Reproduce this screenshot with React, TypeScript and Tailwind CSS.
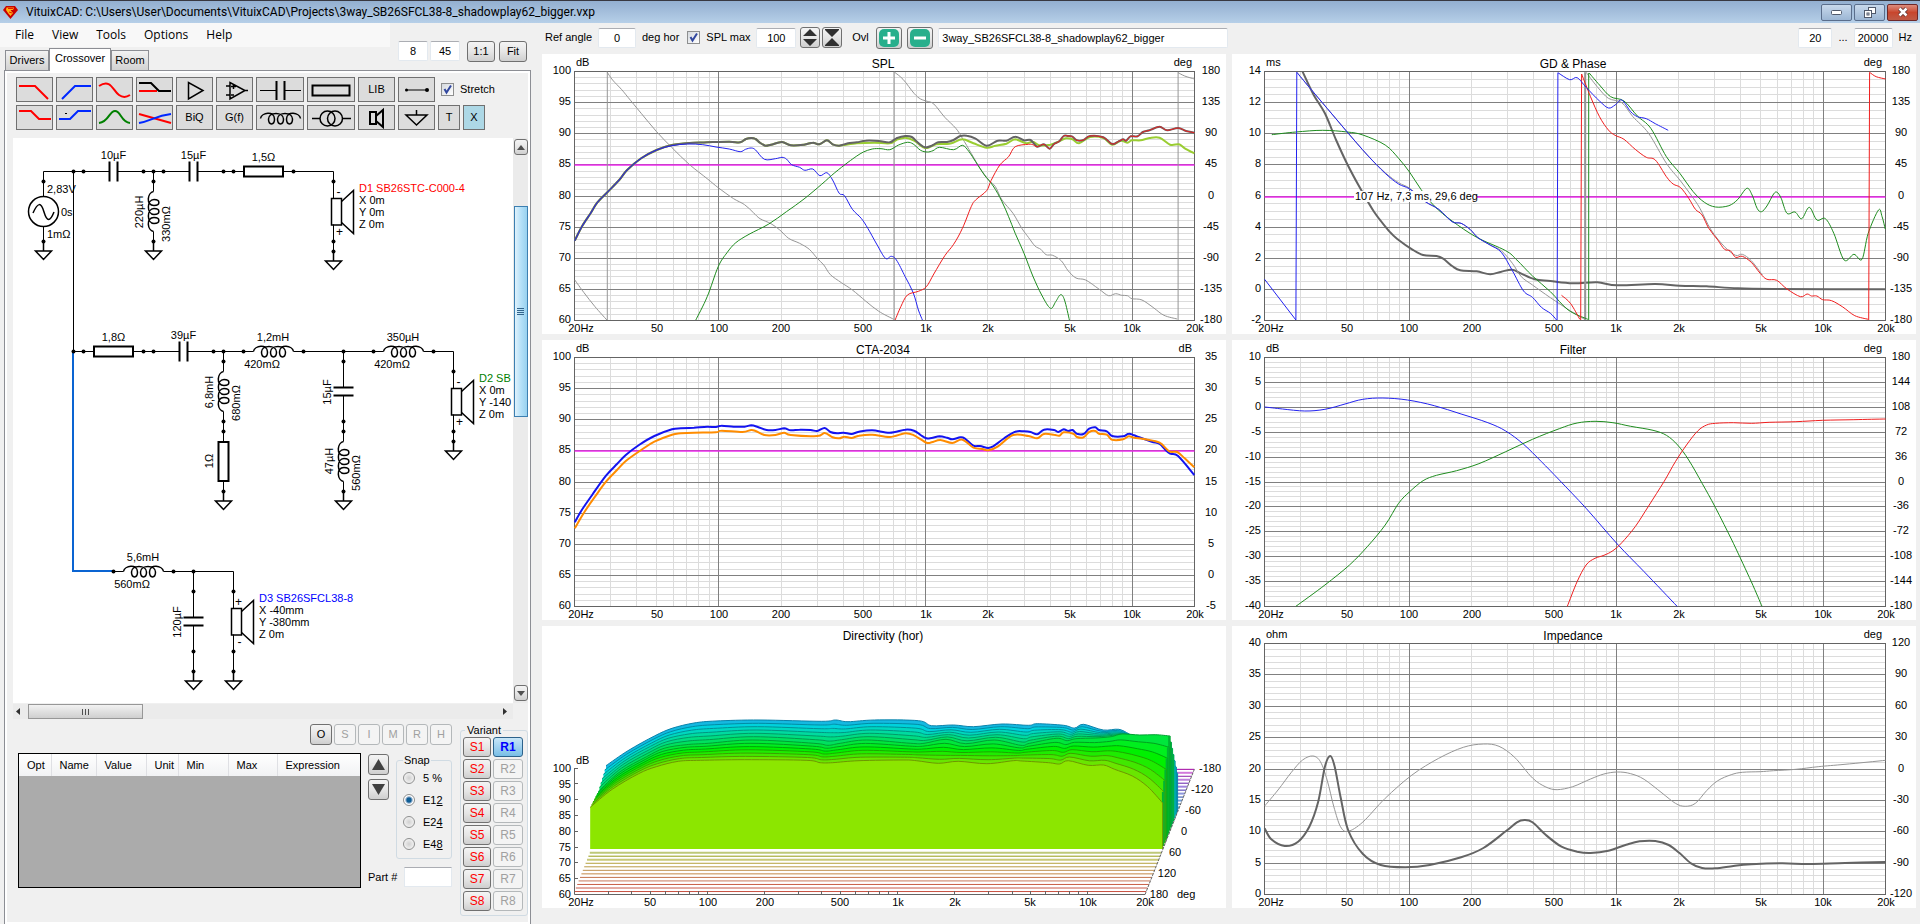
import type { ReactNode } from "react";
import clsx from "clsx";

type Curve = { pts: string; color: string; width?: number; straight?: boolean };
type Scale = { ox: number; oy: number; kx: number; ky: number };

const samples = (pts: string, s: Scale): [number, number][] =>
  pts.split(" ").map((p) => {
    const [x, y] = p.split(",").map(Number);
    return [x / s.kx + s.ox, y / s.ky + s.oy];
  });

const smoothPath = (p: [number, number][]) => {
  let d = `M${p[0][0].toFixed(1)},${p[0][1].toFixed(1)}`;
  for (let i = 0; i < p.length - 1; i++) {
    const a = p[Math.max(i - 1, 0)];
    const b = p[i];
    const c = p[i + 1];
    const e = p[Math.min(i + 2, p.length - 1)];
    const nums = [
      b[0] + (c[0] - a[0]) / 6, b[1] + (c[1] - a[1]) / 6,
      c[0] - (e[0] - b[0]) / 6, c[1] - (e[1] - b[1]) / 6,
      c[0], c[1],
    ];
    d += "C" + nums.map((n) => n.toFixed(1)).join(" ");
  }
  return d;
};

const linePath = (p: [number, number][]) => "M" + p.map((q) => `${q[0].toFixed(1)},${q[1].toFixed(1)}`).join("L");

const snap = (n: number) => Math.floor(n) + 0.5;

const minorFreqs = [30, 40, 50, 60, 70, 80, 90, 200, 300, 400, 500, 600, 700, 800, 900, 2000, 3000, 4000, 5000, 6000, 7000, 8000, 9000];
const majorFreqs = [100, 1000, 10000];
const freqLabels: [number, string][] = [
  [50, "50"], [100, "100"], [200, "200"], [500, "500"], [1000, "1k"],
  [2000, "2k"], [5000, "5k"], [10000, "10k"], [20000, "20k"],
];

const leftScale = (oy: number): Scale => ({ ox: -2, oy, kx: 2.2725, ky: 3 });
const rightScale = (oy: number): Scale => ({ ox: -12, oy, kx: 2.24, ky: 3 });

const GREY = "#969696";
const DARK = "#646464";
const BLUE = "#2222f0";
const GREEN = "#1e8c1e";
const RED = "#f01e1e";

const overallLow =
  "79,722 95,680 115,640 130,608 152,578 180,540 198,510 230,475 265,450 300,435 340,429 380,427 430,425 455,427 468,417 480,414 490,417 500,428 512,437 525,434 550,426 570,436 600,434 620,428 635,433 652,421 665,433 680,437";
const overallHigh =
  "1158,446 1168,432 1180,424 1190,408 1200,408 1210,410 1220,421 1235,420 1250,408 1280,412 1300,432 1315,424 1325,418 1332,422 1342,409 1358,409 1370,396 1385,391 1408,380 1425,391 1450,384 1468,393 1487,398";

const splCurves: Curve[] = [
  { color: GREY, pts: "79,840 100,878 125,920 152,960" },
  { color: GREY, straight: true, pts: "153,960 153,215" },
  { color: GREY, pts: "152,215 165,240 185,268 200,292 230,340 265,395 300,443 340,494 380,536 405,563 440,596 465,614 485,638 500,656 525,671 545,690 565,715 590,730 612,748 630,775 645,795 660,824 685,848 710,870 740,903 770,934 804,958" },
  { color: GREY, straight: true, pts: "805,960 805,215" },
  { color: GREY, pts: "806,217 825,238 850,280 865,297 880,304 895,312 920,352 945,385 960,415 980,460 1000,505 1020,540 1035,560 1050,600 1075,640 1095,685 1110,712 1125,738 1138,748 1150,764 1165,766 1185,783 1200,812 1218,834 1240,840 1270,867 1292,887 1308,881 1322,886 1335,887 1345,896 1368,900 1395,924 1418,946 1448,957" },
  { color: GREY, straight: true, pts: "1450,960 1450,215" },
  { color: GREY, pts: "1450,218 1465,228 1487,237" },
  { color: "#9acd32", width: 2, pts: overallLow + " 720,430 760,428 795,430 810,420 830,413 850,422 870,441 880,444 900,433 920,432 935,430 960,418 985,430 1015,443 1035,437 1060,431 1080,418 1105,430 1120,425 1135,436 1160,434 1180,424 1195,415 1210,418 1225,430 1250,411 1280,414 1300,434 1320,422 1335,428 1345,421 1365,421 1385,414 1408,413 1432,434 1452,433 1465,445 1487,460" },
  { color: DARK, width: 2, pts: overallLow + " 700,430 720,427 740,422 770,423 795,427 810,415 830,408 845,411 860,429 875,442 890,437 905,427 925,426 940,420 955,408 970,407 990,416 1015,437 1040,422 1060,422 1080,410 1100,421 1115,420 1130,440 1145,433 " + overallHigh },
  { color: BLUE, pts: "79,722 95,680 115,640 130,608 152,578 180,540 198,510 230,475 265,450 300,437 335,432 370,434 400,441 430,447 455,455 467,448 480,444 490,450 510,478 535,476 550,472 560,477 572,494 590,502 602,511 620,507 636,527 652,518 665,540 680,580 692,587 710,628 730,655 745,685 765,732 785,775 798,769 810,780 830,830 848,878 860,930 869,960" },
  { color: GREEN, pts: "354,960 380,890 405,800 425,758 445,728 475,703 520,672 560,635 600,597 640,553 670,518 700,487 720,468 735,456 755,447 775,446 795,449 815,435 835,427 848,432 865,451 880,456 893,452 908,442 940,449 960,436 975,455 990,485 1010,525 1030,558 1050,605 1065,650 1080,700 1100,760 1120,828 1140,885 1160,925 1172,905 1183,884 1192,900 1203,960" },
  { color: RED, pts: "807,960 820,920 835,885 860,874 878,860 895,822 920,767 940,733 960,685 980,620 990,600 1015,572 1025,542 1045,495 1065,470 1080,440 1110,433 1120,434 1130,440 1145,433 " + overallHigh },
];

const redTail =
  " 1190,787 1210,820 1225,838 1247,841 1270,867 1300,890 1315,882 1325,888 1337,888 1350,899 1370,902 1395,921 1422,947 1452,958";

const gdCurves: Curve[] = [
  { color: DARK, width: 2, pts: "185,215 210,285 235,340 260,420 285,492 310,555 345,635 380,695 400,720 430,748 455,765 485,768 500,776 520,798 538,811 575,814 605,823 630,815 655,809 675,821 705,838 740,843 790,850 845,847 890,856 975,852 1030,857 1090,859 1160,865 1250,867 1491,868" },
  { color: GREY, pts: "172,217 200,262 240,325 285,396 330,465 370,518 400,548 425,565 460,605 490,628 520,665 540,670 560,688 578,713 605,735 630,752 655,790 675,830 700,855 740,893 790,937 817,958" },
  { color: GREY, width: 2, straight: true, pts: "818,960 818,217" },
  { color: GREY, pts: "820,217 845,260 870,295 900,308 925,350 960,400 1000,490 1030,540 1055,585 1075,625 1100,690 1130,740 1155,766 1170,763 1190,782 1215,825" },
  { color: GREEN, pts: "116,404 170,396 230,391 285,396 320,405 370,435 400,475 425,517 450,568 480,618 520,663 575,712 640,752 665,780 700,828 740,875 780,930 824,958" },
  { color: GREEN, straight: true, pts: "826,960 826,219" },
  { color: GREEN, pts: "827,219 850,255 875,290 905,303 935,348 965,385 1000,470 1030,520 1060,575 1085,607 1110,621 1140,617 1160,598 1180,565 1192,585 1203,625 1213,635 1225,618 1240,582 1248,577 1257,595 1270,640 1288,636 1303,656 1320,622 1337,660 1356,656 1375,700 1398,780 1420,763 1438,778 1452,700 1475,630 1483,650 1490,687" },
  { color: RED, pts: "765,886 785,910 806,958" },
  { color: RED, straight: true, pts: "808,960 810,222" },
  { color: RED, pts: "810,222 830,290 850,350 870,390 885,406 905,418 930,448 955,472 975,480 1000,530 1015,552 1032,563 1050,595 1065,628 1080,645 1095,685 1115,720 1130,748 1143,752 1155,772 1170,769" + redTail },
  { color: RED, straight: true, pts: "1453,960 1455,217" },
  { color: RED, pts: "1455,217 1470,230 1491,237" },
  { color: BLUE, straight: true, pts: "100,838 170,960 172,217" },
  { color: BLUE, pts: "172,217 200,262 240,325 285,396 330,465 370,520 400,552 425,567 460,605 490,628 520,665 540,670 560,688 578,713 605,735 630,757 655,812 680,873 700,892 720,922 740,940 754,960" },
  { color: BLUE, straight: true, pts: "755,960 757,218" },
  { color: BLUE, pts: "757,218 783,239 800,233 820,262 850,303 870,324 885,315 900,300 920,335 935,350 955,356 975,371 1004,391" },
];

const ctaCurves: Curve[] = [
  { color: "#1414f0", width: 2, pts: "79,577 95,540 120,492 150,437 175,402 195,375 225,345 260,318 300,298 320,295 350,293 380,290 400,291 412,287 440,290 465,290 480,286 495,291 515,300 535,300 555,295 570,301 590,299 615,300 630,303 647,294 660,306 675,310 690,308 708,312 725,305 755,301 795,308 830,299 850,302 865,315 878,325 890,324 908,319 925,323 937,328 955,322 965,325 985,347 1000,348 1018,354 1030,349 1055,325 1080,305 1100,304 1115,306 1130,313 1145,299 1168,300 1178,306 1190,298 1200,303 1210,300 1220,311 1235,312 1248,296 1262,292 1270,300 1288,304 1300,318 1325,319 1338,311 1350,316 1362,322 1390,335 1408,342 1420,358 1432,371 1450,378 1487,435" },
  { color: "#ff8c00", width: 2, pts: "79,595 100,548 125,500 150,455 175,420 195,393 230,360 260,335 300,314 320,310 350,308 400,307 412,302 460,306 480,300 490,303 510,315 535,315 555,308 570,315 630,318 647,309 665,322 680,325 692,320 708,324 725,317 755,314 795,321 830,310 850,316 878,338 890,337 910,330 937,339 960,329 985,353 1005,357 1020,361 1040,350 1075,315 1110,318 1130,325 1145,312 1168,314 1180,317 1190,307 1212,311 1220,321 1235,322 1248,306 1262,303 1270,311 1288,314 1300,329 1325,328 1338,319 1350,323 1375,328 1408,338 1430,364 1448,366 1465,385 1487,412" },
];

const filterCurves: Curve[] = [
  { color: BLUE, pts: "100,231 140,237 190,243 235,238 280,222 320,208 365,204 420,210 480,227 540,252 600,278 640,303 680,343 720,395 760,450 820,535 890,642 950,725 1024,829" },
  { color: GREEN, pts: "170,829 235,765 290,705 330,650 370,585 400,520 425,485 455,452 485,436 530,422 580,401 640,365 700,328 760,296 800,279 840,274 880,278 920,289 970,301 1000,316 1025,345 1050,390 1080,460 1110,533 1150,640 1190,755 1214,829" },
  { color: RED, pts: "778,829 800,755 820,705 840,685 860,676 880,662 900,638 930,590 960,528 995,454 1020,395 1045,345 1070,303 1090,285 1110,280 1150,278 1190,280 1230,277 1290,275 1350,271 1420,269 1491,267" },
];

const impedanceCurves: Curve[] = [
  { color: GREY, pts: "100,558 130,510 160,457 185,420 208,408 225,425 240,480 255,560 270,620 287,634 320,606 370,535 430,465 490,415 545,382 590,372 625,379 660,412 700,474 730,501 755,509 790,500 830,477 860,462 890,456 920,461 950,478 990,519 1020,550 1042,559 1065,550 1090,512 1115,482 1145,464 1170,457 1210,455 1240,452 1290,448 1340,440 1400,433 1491,421" },
  { color: DARK, width: 2, pts: "100,625 115,658 145,678 175,665 200,620 220,545 235,440 247,408 257,440 270,530 287,630 320,702 360,735 415,742 470,735 540,712 590,684 640,634 665,607 682,600 700,607 730,645 765,680 800,695 830,699 870,692 910,674 940,664 975,663 1005,675 1030,700 1055,730 1080,744 1110,745 1150,738 1190,733 1260,730 1320,732 1400,729 1491,726" },
];

const range = (from: number, step: number, count: number) =>
  Array.from({ length: count }, (_, i) => String(from + i * step));

interface ChartProps {
  title: string;
  unitLeft: string;
  unitRight: string;
  ticksLeft: string[];
  ticksRight: string[];
  minors: number;
  curves: Curve[];
  scale: Scale;
  height?: number;
  right?: number;
  bottom?: number;
  cursorRow?: number;
  children?: ReactNode;
}

const Chart = ({
  title, unitLeft, unitRight, ticksLeft, ticksRight, minors, curves, scale,
  height = 280, right = 652.5, bottom = 266.5, cursorRow, children,
}: ChartProps) => {
  const x0 = 32.5;
  const y0 = 17.5;
  const fx = (f: number) => x0 + ((right - x0) * Math.log10(f / 20)) / 3;
  const rows = ticksLeft.length - 1;
  const rowY = (i: number) => y0 + ((bottom - y0) * i) / rows;
  return (
    <svg
      viewBox={`0 0 684 ${height}`}
      preserveAspectRatio="xMinYMin meet"
      className={clsx("block w-full bg-white", height === 280 ? "h-[280px]" : "h-[282px]")}
      fill="#000"
      fontSize="11"
    >
      <g stroke="#dcdcdc" fill="none">
        {Array.from({ length: rows * minors }, (_, i) => (
          <path key={i} d={`M${x0},${snap(rowY(i / minors))}H${right}`} />
        ))}
        {minorFreqs.map((f) => (
          <path key={f} d={`M${snap(fx(f))},${y0}V${bottom}`} />
        ))}
      </g>
      <g stroke="#808080" fill="none">
        {ticksLeft.map((t, i) => (
          <path key={t} d={`M${x0},${snap(rowY(i))}H${right}`} />
        ))}
        {majorFreqs.map((f) => (
          <path key={f} d={`M${snap(fx(f))},${y0}V${bottom}`} />
        ))}
        <rect x={x0} y={y0} width={right - x0} height={bottom - y0} stroke="#646464" />
      </g>
      {cursorRow !== undefined && (
        <rect x={x0} y={Math.floor(rowY(cursorRow))} width={right - x0} height="2" fill="#f01ef0" opacity="0.7" />
      )}
      {curves.map((c, i) => (
        <path
          key={i}
          d={c.straight ? linePath(samples(c.pts, scale)) : smoothPath(samples(c.pts, scale))}
          stroke={c.color}
          strokeWidth={c.width ?? 1}
          fill="none"
          strokeLinejoin="round"
        />
      ))}
      {children}
      <text x="341" y="14" textAnchor="middle" fontSize="12">{title}</text>
      <text x="34" y="12">{unitLeft}</text>
      <text x="650" y="12" textAnchor="end">{unitRight}</text>
      {ticksLeft.map((t, i) => (
        <text key={t} x="29" y={Math.floor(rowY(i)) + 3} textAnchor="end">{t}</text>
      ))}
      {ticksRight.map((t, i) => (
        <text key={t} x="669" y={Math.floor(rowY(i)) + 3} textAnchor="middle">{t}</text>
      ))}
      <text x="39" y={bottom + 11.5} textAnchor="middle">20Hz</text>
      {freqLabels.map(([f, label]) => (
        <text key={label} x={Math.round(fx(f))} y={bottom + 11.5} textAnchor="middle">{label}</text>
      ))}
    </svg>
  );
};

// Polar slices of the waterfall: front (60 deg), on axis, back
const sliceX = [150, 200, 260, 300, 350, 400, 500, 640, 672, 700, 760, 860, 890, 940, 985, 1050, 1110, 1130, 1190, 1215, 1235, 1280, 1315, 1340, 1380, 1415, 1449];
const backY = [437, 392, 348, 325, 309, 303, 300, 304, 300, 305, 300, 302, 317, 315, 320, 312, 316, 311, 316, 324, 313, 330, 328, 343, 375, 410, 460];
const axisY = [515, 455, 410, 385, 374, 370, 360, 370, 376, 370, 360, 370, 370, 358, 371, 360, 376, 370, 355, 362, 356, 354, 350, 342, 345, 344, 348];
const frontY = [562, 508, 461, 440, 424, 421, 419, 421, 428, 428, 422, 420, 422, 430, 424, 431, 422, 423, 428, 432, 422, 436, 435, 448, 468, 500, 549];
const sliceFill = ["#8ce600", "#69e600", "#41e800", "#1eec00", "#00f000", "#00ee1e", "#00e63c", "#00e05f", "#00dc82", "#00daa0", "#00d7be", "#00d2dc", "#14b9e1"];
const sliceEdge = ["#6e9600", "#559b00", "#3ca000", "#1ea500", "#00a50a", "#00a01e", "#00a032", "#009b50", "#009b69", "#009682", "#009196", "#008ca5", "#0a82aa"];

const floorColors = ["#bec878", "#969b14", "#c8c878", "#b4a03c", "#b99b46", "#be9150", "#c38746", "#c3734b", "#c8785a", "#c85f46", "#c85a4b", "#c85041"];
const backColors = ["#a000a0", "#d278dc", "#8c1eaa", "#be82dc", "#641eaa", "#a082dc", "#3c28aa", "#8c96dc", "#1e46aa", "#6ea0dc", "#1482b4", "#50b4d2", "#1491b4"];

const Directivity = () => {
  const s = leftScale(-6);
  const X = (n: number) => n / s.kx + s.ox;
  const Y = (n: number) => n / s.ky + s.oy;
  const fx = (f: number) => 79 + (1295.5 * Math.log10(f / 20)) / 3;
  const edgeX = (y: number) => 1375 + ((822 - y) * 112) / 374;
  return (
    <svg viewBox="0 0 684 282" preserveAspectRatio="xMinYMin meet" className="block h-[282px] w-full bg-white" fontSize="11">
      {backColors.map((c, i) => {
        const y = 448 + i * 10.4;
        return <path key={i} d={`M${X(1440)},${Y(y)}H${X(edgeX(y))}`} stroke={c} strokeWidth={i % 2 ? 2 : 1} />;
      })}
      {floorColors.map((c, i) => {
        const y = 698 + i * 10.6;
        return <path key={i} d={`M${X(edgeX(y) - 1299)},${Y(y)}H${X(edgeX(y))}`} stroke={c} strokeWidth={i === 0 || i === 2 ? 2 : 1} />;
      })}
      {sliceFill.map((_, n) => {
        const i = 12 - n;
        const t = i / 12;
        const pts = sliceX.map((bx, k): [number, number] => {
          const u = (bx - 150) / 1299;
          const y = t < 0.5
            ? frontY[k] + (axisY[k] - frontY[k]) * t * 2
            : axisY[k] + (backY[k] - axisY[k]) * (t - 0.5) * 2;
          return [X(114 + 36 * t + u * (1301 - 2 * t)), Y(y)];
        });
        const base = Y(687 - 112 * t);
        const d = smoothPath(pts);
        const last = pts[pts.length - 1];
        return (
          <g key={i}>
            <path d={`${d}V${base}H${pts[0][0]}Z`} fill={sliceFill[i]} />
            <path d={`${d}V${base}`} fill="none" stroke={sliceEdge[i]} />
            {i > 0 && i < 10 && <path d={`M${last[0] - 1},${last[1]}V${base}`} stroke="#00b432" strokeWidth="2" />}
          </g>
        );
      })}
      <g stroke="#646464" fill="none">
        <path d={`M32.5,${Y(444)}V268.5H${X(1375)}`} />
        <path d={`M${X(1375)},268.5L${X(1487)},${Y(448)}`} strokeDasharray="3 1" />
        {[0, 1, 2, 3, 4, 5, 6, 7].map((i) => (
          <path key={i} d={`M33,${snap(142 + i * 15.8)}h3`} />
        ))}
        {[...minorFreqs, ...majorFreqs].map((f) => (
          <path key={f} d={`M${snap(X(fx(f)))},268v-3`} />
        ))}
      </g>
      <text x="341" y="14" textAnchor="middle" fontSize="12">Directivity (hor)</text>
      <text x="34" y="138">dB</text>
      {range(100, -5, 9).map((t, i) => (
        <text key={t} x="29" y={Math.round(146 + i * 15.7)} textAnchor="end">{t}</text>
      ))}
      {range(-180, 60, 7).map((t, i) => (
        <text key={t} x={Math.round(668 - i * 8.4) - (i > 2 ? 1 : 0)} y={146 + i * 21} textAnchor="middle">{t}</text>
      ))}
      <text x="635" y="272">deg</text>
      <text x="39" y="280" textAnchor="middle">20Hz</text>
      {freqLabels.map(([f, label]) => (
        <text key={label} x={Math.round(X(fx(f)))} y="280" textAnchor="middle">{label}</text>
      ))}
    </svg>
  );
};

/* ---------- schematic parts ---------- */

const coil = "M-20,0C-19,-6 -6,-8 -6,.5C-6,7 -12,7 -12,.5C-12,-7 3,-7 3,.5C3,7 -3,7 -3,.5C-3,-7 12,-7 12,.5C12,7 6,7 6,.5C6,-8 19,-6 20,0";

type At = { x: number; y: number; v?: boolean };

const place = ({ x, y, v }: At) => `translate(${x} ${y})${v ? " rotate(-90)" : ""}`;

const Inductor = (p: At) => (
  <g transform={place(p)} fill="none" stroke="#000">
    <path d="M-30,0H-20M20,0H30" />
    <path d={coil} strokeWidth="1.5" />
  </g>
);

const Capacitor = (p: At) => (
  <g transform={place(p)} fill="none" stroke="#000">
    <path d="M-30,0H-4M4,0H30" />
    <path d="M-4,-10V10M4,-10V10" strokeWidth="2" />
  </g>
);

const Resistor = (p: At) => (
  <g transform={place(p)} fill="none" stroke="#000">
    <path d="M-30,0H-20M20,0H30" />
    <rect x="-19.5" y="-5" width="39" height="10" strokeWidth="2" />
  </g>
);

const Ground = ({ x, y }: At) => (
  <path d={`M${x},${y}v9.5m-8,0h16l-8,8.5z`} fill="none" stroke="#000" strokeWidth="1.5" />
);

const Driver = ({ x, y, top, bottom }: At & { top: string; bottom: string }) => (
  <g transform={`translate(${x} ${y})`} fill="none" stroke="#000">
    <path d="M0,0V17M0,43V60" />
    <rect x="-2" y="17" width="10" height="26.5" strokeWidth="1.5" />
    <path d="M8,20L20,9V52L8,41" strokeWidth="1.5" />
    <text x="5" y="14" textAnchor="middle" stroke="none" fill="#000" fontSize="12">{top}</text>
    <text x="6" y="54" textAnchor="middle" stroke="none" fill="#000" fontSize="12">{bottom}</text>
  </g>
);

const DriverInfo = ({ x, y, color, lines }: At & { color: string; lines: string[] }) => (
  <>
    {lines.map((line, i) => (
      <text key={line} x={x} y={y + i * 12} fill={i === 0 ? color : "#000"}>{line}</text>
    ))}
  </>
);

const nodes: [number, number][] = [
  [30.5, 43.5], [30.5, 103.5], [60.5, 33.5], [70.5, 33.5], [130.5, 33.5], [140.5, 33.5], [150.5, 33.5], [210.5, 33.5],
  [220.5, 33.5], [280.5, 33.5], [140.5, 43.5], [140.5, 103.5], [320.5, 43.5], [320.5, 103.5], [320.5, 113.5],
  [60.5, 213.5], [70.5, 213.5], [130.5, 213.5], [140.5, 213.5], [200.5, 213.5], [210.5, 213.5], [230.5, 213.5],
  [290.5, 213.5], [330.5, 213.5], [360.5, 213.5], [420.5, 213.5], [440.5, 233.5], [440.5, 293.5], [440.5, 303.5],
  [210.5, 223.5], [210.5, 283.5], [210.5, 293.5], [210.5, 353.5], [330.5, 223.5], [330.5, 283.5], [330.5, 293.5],
  [330.5, 353.5], [100.5, 433.5], [160.5, 433.5], [180.5, 433.5], [180.5, 453.5], [180.5, 513.5], [180.5, 533.5],
  [220.5, 453.5], [220.5, 513.5], [220.5, 533.5],
];

const partLabels: [number, number, string][] = [
  [100.5, 21, "10µF"], [180.5, 21, "15µF"], [250.5, 23, "1,5Ω"], [100.5, 203, "1,8Ω"], [170.5, 201, "39µF"],
  [260, 203, "1,2mH"], [249, 230, "420mΩ"], [390, 203, "350µH"], [379, 230, "420mΩ"], [130, 423, "5,6mH"], [119, 450, "560mΩ"],
];

const sideLabels: [number, number, string][] = [
  [130, 74, "220µH"], [157, 86, "330mΩ"], [200, 254, "6,8mH"], [227, 265, "680mΩ"], [200, 323, "1Ω"],
  [318, 254, "15µF"], [320, 323, "47µH"], [347, 335, "560mΩ"], [168, 484, "120µF"],
];

const Schematic = () => (
  <svg viewBox="0 0 500 565" preserveAspectRatio="xMinYMin meet" className="block h-[565px] w-[500px] bg-white" fontSize="11" fill="#000">
    <g fill="none" stroke="#000">
      <path d="M30.5,58V33.5H70.5M30.5,89V103.5M60.5,33.5V213.5H70.5M130.5,33.5H150.5M210.5,33.5H220.5M280.5,33.5H320.5V43.5M140.5,33.5V43.5" />
      <path d="M320.5,103.5V113.5M130.5,213.5H140.5M200.5,213.5H230.5M210.5,213.5V223.5M210.5,283.5V293.5M290.5,213.5H360.5" />
      <path d="M330.5,213.5V223.5M330.5,283.5V293.5M420.5,213.5H440.5V233.5M440.5,293.5V303.5M160.5,433.5H220.5V453.5" />
      <path d="M180.5,433.5V453.5M180.5,513.5V533.5M220.5,513.5V533.5" />
      <circle cx="30.5" cy="73.5" r="15" strokeWidth="1.5" />
      <path d="M20,75C25,64 28,64 31,74S37,84 41,74" strokeWidth="1.5" />
    </g>
    <path d="M60,214V433H101" fill="none" stroke="#0a64d2" strokeWidth="2" />
    <Capacitor x={100.5} y={33.5} />
    <Capacitor x={180.5} y={33.5} />
    <Resistor x={250.5} y={33.5} />
    <Inductor x={140.5} y={73.5} v />
    <Driver x={320.5} y={43.5} top="-" bottom="+" />
    <Resistor x={100.5} y={213.5} />
    <Capacitor x={170.5} y={213.5} />
    <Inductor x={260.5} y={213.5} />
    <Inductor x={390.5} y={213.5} />
    <Inductor x={210.5} y={253.5} v />
    <Resistor x={210.5} y={323.5} v />
    <Capacitor x={330.5} y={253.5} v />
    <Inductor x={330.5} y={323.5} v />
    <Driver x={440.5} y={233.5} top="-" bottom="+" />
    <Inductor x={130.5} y={433.5} />
    <Capacitor x={180.5} y={483.5} v />
    <Driver x={220.5} y={453.5} top="+" bottom="-" />
    <Ground x={30.5} y={103.5} />
    <Ground x={140.5} y={103.5} />
    <Ground x={320.5} y={113.5} />
    <Ground x={210.5} y={353.5} />
    <Ground x={330.5} y={353.5} />
    <Ground x={440.5} y={303.5} />
    <Ground x={180.5} y={533.5} />
    <Ground x={220.5} y={533.5} />
    {nodes.map(([x, y]) => (
      <circle key={`${x}-${y}`} cx={x} cy={y} r="2" />
    ))}
    {partLabels.map(([x, y, label]) => (
      <text key={`${x}-${y}`} x={x} y={y} textAnchor="middle">{label}</text>
    ))}
    {sideLabels.map(([x, y, label]) => (
      <text key={`${x}-${y}`} transform={`translate(${x} ${y}) rotate(-90)`} textAnchor="middle">{label}</text>
    ))}
    <text x="34" y="55">2,83V</text>
    <text x="48" y="78">0s</text>
    <text x="34" y="100">1mΩ</text>
    <DriverInfo x={346} y={54} color="#ff0000" lines={["D1 SB26STC-C000-4", "X 0m", "Y 0m", "Z 0m"]} />
    <DriverInfo x={466} y={244} color="#008000" lines={["D2 SB", "X 0m", "Y -140", "Z 0m"]} />
    <DriverInfo x={246} y={464} color="#0000ff" lines={["D3 SB26SFCL38-8", "X -40mm", "Y -380mm", "Z 0m"]} />
  </svg>
);

/* ---------- controls ---------- */

const face = "bg-linear-to-b from-[#f4f4f4] via-[#e6e6e6] to-[#cfcfcf] border border-[#707070] rounded-[3px]";
const faceOff = "bg-[#f4f4f4] border border-[#b4b8ba] rounded-[3px] text-[#a0a0a0]";

const WinButton = ({ className, disabled, label, children }: { className?: string; disabled?: boolean; label?: string; children: ReactNode }) => (
  <button type="button" disabled={disabled} aria-label={label} className={clsx("flex shrink-0 items-center justify-center", disabled ? faceOff : face, className)}>
    {children}
  </button>
);

const Field = ({ value, label, className }: { value: string; label: string; className?: string }) => (
  <input aria-label={label} defaultValue={value} className={clsx("h-5 rounded-[2px] border border-[#e3e9ef] border-t-[#abadb3] bg-white outline-none", className)} />
);

const Check = ({ id }: { id: string }) => (
  <span className="relative size-[13px] shrink-0">
    <input id={id} type="checkbox" defaultChecked className="block size-[13px] appearance-none border border-[#8e8f8f] bg-linear-to-br from-[#d5d9de] to-white" />
    <svg viewBox="0 0 13 13" className="pointer-events-none absolute inset-0" fill="none" stroke="#31479e" strokeWidth="2">
      <path d="M3.5,6L5.5,9.5L10,2.5" />
    </svg>
  </span>
);

const ToolButton = ({ label, wide, small, active, children }: { label: string; wide?: boolean; small?: boolean; active?: boolean; children: ReactNode }) => (
  <button
    type="button"
    aria-label={label}
    className={clsx(
      "flex h-[25px] shrink-0 items-center justify-center border border-[#707070]",
      wide ? "w-12" : small ? "w-[22px]" : "w-[37px]",
      active ? "bg-[#add8e6]" : "bg-[#dcdcdc]"
    )}
  >
    {children}
  </button>
);

const Glyph = ({ w = 35, children }: { w?: number; children: ReactNode }) => (
  <svg width={w} height="23" viewBox={`0 0 ${w} 23`} fill="none" stroke="#000" strokeWidth="2">{children}</svg>
);

const Toolbar = () => (
  <div className="flex flex-col gap-[3px] px-[11px] pt-1.5">
    <div className="flex gap-[3px]">
      <ToolButton label="Low pass"><Glyph><path d="M2,8H18L31,21" stroke="#f00" /></Glyph></ToolButton>
      <ToolButton label="High pass"><Glyph><path d="M5,21L18,8H34" stroke="#0028ff" /></Glyph></ToolButton>
      <ToolButton label="Shelf"><Glyph><path d="M2,8C14,0 16,13 22,17C26,20 30,19 33,17" stroke="#f00" /></Glyph></ToolButton>
      <ToolButton label="Delay"><Glyph><path d="M2,13H20" stroke="#f00" /><path d="M2,5H14L22,13H34" /></Glyph></ToolButton>
      <ToolButton label="Gain"><Glyph><path d="M11.5,4.5V21L26,12.5Z" strokeWidth="1.5" /></Glyph></ToolButton>
      <ToolButton label="Op-amp"><Glyph><path d="M13,4.5V21L28,12.5ZM9,8H13M9,17H13M28,12.5H31M14,8.5H19M16.5,6V11M14,17H17" strokeWidth="1.5" /></Glyph></ToolButton>
      <ToolButton label="Capacitor" wide><Glyph w={46}><path d="M3,12.5H19M27,12.5H44" strokeWidth="1" /><path d="M19.5,3V22M27.5,3V22" /></Glyph></ToolButton>
      <ToolButton label="Resistor" wide><Glyph w={46}><rect x="4.5" y="7.5" width="37" height="10" /></Glyph></ToolButton>
      <ToolButton label="Library">LIB</ToolButton>
      <ToolButton label="Wire"><Glyph><path d="M7,12H28" strokeWidth="1" /><circle cx="7.5" cy="12" r="1.5" fill="#000" stroke="none" /><circle cx="28" cy="12" r="2" fill="#000" stroke="none" /></Glyph></ToolButton>
      <div className="ml-[3px] flex items-center gap-1.5">
        <Check id="stretch" />
        <label htmlFor="stretch">Stretch</label>
      </div>
    </div>
    <div className="flex gap-[3px]">
      <ToolButton label="Low shelf"><Glyph><path d="M2,5H14L22,13H34" stroke="#f00" /></Glyph></ToolButton>
      <ToolButton label="High shelf"><Glyph><path d="M2,13H13L21,5H34" stroke="#0028ff" /><path d="M8,7.5h2" strokeWidth="1" /></Glyph></ToolButton>
      <ToolButton label="Peak"><Glyph><path d="M2,17C12,16 12,5 18,5S24,16 33,17" stroke="#008000" /></Glyph></ToolButton>
      <ToolButton label="Crossing"><Glyph><path d="M2,8L34,17" stroke="#f00" /><path d="M2,17C14,15 18,10 34,8" stroke="#0028ff" /></Glyph></ToolButton>
      <ToolButton label="Biquad">BiQ</ToolButton>
      <ToolButton label="Transfer function">G(f)</ToolButton>
      <ToolButton label="Inductor" wide><Glyph w={46}><g transform="translate(23.5 12.5)"><path d={coil} strokeWidth="1.5" /></g></Glyph></ToolButton>
      <ToolButton label="Transformer" wide><Glyph w={46}><circle cx="19.5" cy="12.5" r="7.5" strokeWidth="1.5" /><circle cx="27" cy="12.5" r="7.5" strokeWidth="1.5" /><path d="M4,12.5H12M34.5,12.5H43" strokeWidth="1.5" /></Glyph></ToolButton>
      <ToolButton label="Driver"><Glyph><path d="M11,6H17V18H11ZM17,10L24,4V21L17,15" /></Glyph></ToolButton>
      <ToolButton label="Ground"><Glyph><path d="M7,9H28L17.5,19ZM17.5,4V9" strokeWidth="1.5" /></Glyph></ToolButton>
      <ToolButton label="Text" small>T</ToolButton>
      <ToolButton label="Close" small active>X</ToolButton>
    </div>
  </div>
);

const ScrollBars = ({ children }: { children: ReactNode }) => (
  <div className="mt-2 ml-2">
    <div className="flex">
      {children}
      <div className="flex w-[15px] flex-col items-center bg-[#ebebeb]">
        <WinButton label="Scroll up" className="mt-px h-4 w-[14px]"><svg width="8" height="5"><path d="M0,5L4,0L8,5Z" fill="#505050" /></svg></WinButton>
        <div className="mt-[51px] flex h-[211px] w-[14px] flex-col items-center justify-center gap-px border border-[#3c7fb1] bg-linear-to-r from-[#e0f2fc] via-[#b4e0f8] to-[#98d1ef]">
          <span className="h-px w-[7px] bg-[#32648c]" />
          <span className="h-px w-[7px] bg-[#32648c]" />
          <span className="h-px w-[7px] bg-[#32648c]" />
          <span className="h-px w-[7px] bg-[#32648c]" />
        </div>
        <WinButton label="Scroll down" className="mt-auto mb-0.5 h-4 w-[14px]"><svg width="8" height="5"><path d="M0,0H8L4,5Z" fill="#505050" /></svg></WinButton>
      </div>
    </div>
    <div className="mt-px flex h-[15px] w-[500px] items-center justify-between bg-[#ebebeb] pr-1.5 pl-[3px]">
      <div className="flex items-center gap-2">
        <svg width="4" height="7"><path d="M4,0V7L0,3.5Z" fill="#303030" /></svg>
        <div className="flex h-[15px] w-[115px] items-center justify-center gap-px border border-[#979797] bg-linear-to-b from-[#f2f2f2] to-[#cfcfcf]">
          <span className="h-1.5 w-px bg-[#505050]" />
          <span className="mx-px h-1.5 w-px bg-[#505050]" />
          <span className="h-1.5 w-px bg-[#505050]" />
        </div>
      </div>
      <svg width="4" height="7"><path d="M0,0V7L4,3.5Z" fill="#303030" /></svg>
    </div>
  </div>
);

const columns: [string, string][] = [
  ["Opt", "w-[32px] pl-2"], ["Name", "w-[45px] pl-2"], ["Value", "w-[50px] pl-2"], ["Unit", "w-[32px] pl-2"],
  ["Min", "w-[50px] pl-2"], ["Max", "w-[49px] pl-2"], ["Expression", "pl-2"],
];

const snaps: [string, string][] = [["5 %", ""], ["E1", "2"], ["E2", "4"], ["E4", "8"]];

const BottomPanel = () => (
  <div className="mt-1 flex gap-2 pr-0.5 pl-[13px]">
    <div className="w-[434px]">
      <div className="mt-px flex justify-end gap-0.5">
        {["O", "S", "I", "M", "R", "H"].map((t) => (
          <WinButton key={t} disabled={t !== "O"} className="h-[21px] w-[22px]">{t}</WinButton>
        ))}
      </div>
      <div className="mt-2 flex gap-[7px]">
        <div className="h-[135px] w-[343px] border border-black bg-[#ababab]">
          <table className="w-full table-fixed border-collapse">
            <thead>
              <tr className="h-[22px] bg-linear-to-b from-white to-[#f1f2f4]">
                {columns.map(([name, cls]) => (
                  <th key={name} className={clsx("border-r border-[#dfe0e4] text-left font-normal last:border-r-0", cls)}>{name}</th>
                ))}
              </tr>
            </thead>
          </table>
        </div>
        <div className="w-[84px]">
          <div className="flex justify-between">
            <div className="flex flex-col gap-1">
              <WinButton label="Move up" className="mt-px size-[21px]"><svg width="13" height="11"><path d="M0,11L6.5,0L13,11Z" fill="#404040" /></svg></WinButton>
              <WinButton label="Move down" className="size-[21px]"><svg width="13" height="11"><path d="M0,0H13L6.5,11Z" fill="#404040" /></svg></WinButton>
            </div>
            <fieldset className="h-[106px] w-14 rounded-[3px] border border-[#d0dbe3] px-1.5">
              <legend className="px-px leading-[14px]">Snap</legend>
              {snaps.map(([text, key]) => (
                <label key={text} className="flex h-[22px] items-center gap-2">
                  <input
                    type="radio"
                    name="snap"
                    defaultChecked={text === "E1"}
                    className="size-3 shrink-0 appearance-none rounded-full border border-[#8e8f8f] bg-radial from-[#d0d0d0] to-white checked:from-[#0f5f96] checked:from-30% checked:to-white checked:to-60%"
                  />
                  <span className="whitespace-nowrap">{text}<u>{key}</u></span>
                </label>
              ))}
            </fieldset>
          </div>
          <div className="mt-2 flex items-center justify-between">
            <label htmlFor="part" className="whitespace-nowrap">Part #</label>
            <input id="part" className="h-5 w-12 border border-[#e3e9ef] border-t-[#abadb3] bg-white" />
          </div>
        </div>
      </div>
    </div>
    <fieldset className="h-[193px] w-[68px] min-w-0 rounded-[3px] border border-[#d0dbe3] px-0.5">
      <legend className="ml-0.5 px-0.5 leading-[14px]">Variant</legend>
      <div className="grid grid-cols-[28px_30px] gap-0.5">
        {[1, 2, 3, 4, 5, 6, 7, 8].map((n) => [
          <WinButton key={`S${n}`} className="h-5 text-xs text-[#ff0000]">S{n}</WinButton>,
          n === 1 ? (
            <button key="R1" type="button" className="h-5 rounded-[3px] border border-[#2c628b] bg-linear-to-b from-[#c8e6f8] to-[#78bee6] text-xs font-bold text-[#0000ff]">R1</button>
          ) : (
            <WinButton key={`R${n}`} disabled className="h-5 text-xs">R{n}</WinButton>
          ),
        ])}
      </div>
    </fieldset>
  </div>
);

const TitleBar = () => (
  <header className="flex h-[23px] items-center border-t border-[#383840] bg-linear-to-b from-[#93afd0] to-[#b6cfe8] pr-0.5 pl-[3px] font-['Roboto',sans-serif] text-xs">
    <svg width="15" height="14" viewBox="0 0 15 14">
      <path d="M3,1H12L15,5L7.5,14L0,5Z" fill="#c80000" />
      <path d="M3.5,2.5H11L10,5H7.5L10,8L7.5,11L5,8L3,5Z" fill="#ffb414" />
      <path d="M5,3.5H10M6,7L9,8" stroke="#f01400" />
    </svg>
    <h1 className="ml-2 whitespace-nowrap">VituixCAD: C:\Users\User\Documents\VituixCAD\Projects\3way_SB26SFCL38-8_shadowplay62_bigger.vxp</h1>
    <div className="ml-auto flex gap-0.5">
      <button type="button" aria-label="Minimize" className="flex h-[17px] w-[31px] items-center justify-center rounded-[2px] border border-[#5a6e8c] bg-linear-to-b from-[#c8d9ec] to-[#9cb6d4]">
        <svg width="11" height="5"><rect x=".5" y=".5" width="10" height="4" rx="1" fill="#fff" stroke="#50596b" /></svg>
      </button>
      <button type="button" aria-label="Restore" className="flex h-[17px] w-[31px] items-center justify-center rounded-[2px] border border-[#5a6e8c] bg-linear-to-b from-[#c8d9ec] to-[#9cb6d4]">
        <svg width="12" height="11" fill="#fff" stroke="#50596b"><rect x="4.5" y=".5" width="7" height="6" /><rect x=".5" y="3.5" width="7" height="7" /><rect x="3" y="6" width="2" height="2" /></svg>
      </button>
      <button type="button" aria-label="Close window" className="flex h-[17px] w-[31px] items-center justify-center rounded-[2px] border border-[#6e2828] bg-linear-to-b from-[#dc8c7d] via-[#c8462d] to-[#be5a46]">
        <svg width="12" height="10" viewBox="0 0 12 10"><path d="M2.5,1.5L9.5,8.5M9.5,1.5L2.5,8.5" stroke="#5a3232" strokeWidth="4" /><path d="M2.5,1.5L9.5,8.5M9.5,1.5L2.5,8.5" stroke="#fff" strokeWidth="2.5" /></svg>
      </button>
    </div>
  </header>
);

const LeftPane = () => (
  <section className="flex w-[542px] shrink-0 flex-col">
    <div className="flex h-[47px]">
      <div className="flex w-[390px] flex-col">
        <nav className="flex h-6 items-center gap-[18px] bg-[#f8f8f8] pl-[15px] font-['Open_Sans',sans-serif] text-xs">
          {["File", "View", "Tools", "Options", "Help"].map((m) => (
            <button key={m} type="button">{m}</button>
          ))}
        </nav>
        <div className="flex flex-1 items-end pl-[5px]" role="tablist">
          <button type="button" role="tab" className="h-5 w-11 border border-b-0 border-[#8c8e94] bg-linear-to-b from-[#f2f2f2] to-[#d2d2d2]">Drivers</button>
          <button type="button" role="tab" aria-selected="true" className="z-10 -mb-px h-[23px] w-[62px] border border-b-0 border-[#8c8e94] bg-white pb-1">Crossover</button>
          <button type="button" role="tab" className="h-5 w-[38px] border border-b-0 border-[#8c8e94] bg-linear-to-b from-[#f2f2f2] to-[#d2d2d2]">Room</button>
        </div>
      </div>
      <div className="ml-2 flex pt-[18px]">
        <Field label="Horizontal step" value="8" className="w-[30px] text-center" />
        <Field label="Vertical step" value="45" className="ml-0.5 w-[30px] text-center" />
        <WinButton className="ml-[7px] h-[21px] w-7">1:1</WinButton>
        <WinButton className="ml-1 h-[21px] w-7">Fit</WinButton>
      </div>
    </div>
    <div className="ml-1 flex w-[527px] flex-1 flex-col border border-[#8c8e94] bg-[#f0f0f0] pb-2 outline-2 -outline-offset-3 outline-white">
      <Toolbar />
      <ScrollBars><Schematic /></ScrollBars>
      <BottomPanel />
    </div>
  </section>
);

const OverlayButton = ({ label, plus }: { label: string; plus?: boolean }) => (
  <WinButton label={label} className="h-[22px] w-[26px]">
    <svg width="20" height="18" viewBox="0 0 20 18">
      <rect width="20" height="18" rx="5" fill="#28af8c" />
      <path d={plus ? "M4,9H16M10,3V15" : "M4,9H16"} stroke="#fff" strokeWidth="3" />
    </svg>
  </WinButton>
);

const TopControls = () => (
  <div className="flex h-[31px] items-center pr-1 pb-0.5 pl-[3px] whitespace-nowrap">
    <label htmlFor="ref" className="w-[53px]">Ref angle</label>
    <input id="ref" defaultValue="0" className="h-5 w-[38px] rounded-[2px] border border-[#e3e9ef] border-t-[#abadb3] bg-white text-center" />
    <span className="ml-1.5">deg hor</span>
    <div className="ml-2 flex items-center gap-1.5">
      <Check id="splmax" />
      <label htmlFor="splmax" className="w-[44px]">SPL max</label>
    </div>
    <Field label="SPL max value" value="100" className="ml-1.5 w-[40px] text-center" />
    <WinButton label="Expand" className="ml-1 h-[21px] w-5"><svg width="14" height="17"><path d="M0,7L7,0L14,7ZM0,10H14L7,17Z" fill="#303030" /></svg></WinButton>
    <WinButton label="Compress" className="ml-0.5 h-[21px] w-5"><svg width="14" height="17"><path d="M0,1H14L7,8ZM7,9L14,16H0Z" fill="#303030" /><path d="M0,.5H14M0,16.5H14" stroke="#303030" /></svg></WinButton>
    <span className="ml-[10px] w-6">Ovl</span>
    <OverlayButton label="Add overlay" plus />
    <span className="w-[5px]" />
    <OverlayButton label="Remove overlay" />
    <Field label="Overlay name" value="3way_SB26SFCL38-8_shadowplay62_bigger" className="ml-[5px] w-[290px] pl-[3px]" />
    <Field label="Minimum frequency" value="20" className="ml-auto w-[34px] text-center" />
    <span className="mx-1.5">...</span>
    <Field label="Maximum frequency" value="20000" className="w-[39px] text-center" />
    <span className="mr-1 ml-1.5">Hz</span>
  </div>
);

export default function App() {
  return (
    <div className="flex min-h-screen flex-col bg-[#f0f0f0] font-['Liberation_Sans',Arial,sans-serif] text-[11px] text-black">
      <TitleBar />
      <main className="flex flex-1">
        <LeftPane />
        <section className="min-w-0 flex-1">
          <TopControls />
          <div className="grid grid-cols-2 gap-1.5 pr-1">
            <Chart title="SPL" unitLeft="dB" unitRight="deg" ticksLeft={range(100, -5, 9)} ticksRight={range(180, -45, 9)} minors={5} curves={splCurves} scale={leftScale(-54)} cursorRow={3} />
            <Chart title="GD & Phase" unitLeft="ms" unitRight="deg" ticksLeft={range(14, -2, 9)} ticksRight={range(180, -45, 9)} minors={4} curves={gdCurves} scale={rightScale(-54)} right={653.5} cursorRow={4}>
              <rect x="122" y="137" width="123" height="11" fill="#fff" />
              <text x="123" y="146">107 Hz, 7,3 ms, 29,6 deg</text>
            </Chart>
            <Chart title="CTA-2034" unitLeft="dB" unitRight="dB" ticksLeft={range(100, -5, 9)} ticksRight={range(35, -5, 9)} minors={5} curves={ctaCurves} scale={leftScale(-10)} cursorRow={3} />
            <Chart title="Filter" unitLeft="dB" unitRight="deg" ticksLeft={range(10, -5, 11)} ticksRight={range(180, -36, 11)} minors={5} curves={filterCurves} scale={rightScale(-10)} right={653.5} />
            <Directivity />
            <Chart title="Impedance" unitLeft="ohm" unitRight="deg" ticksLeft={range(40, -5, 9)} ticksRight={range(120, -30, 9)} minors={5} curves={impedanceCurves} scale={rightScale(-6)} height={282} right={653.5} bottom={268.5} />
          </div>
        </section>
      </main>
    </div>
  );
}
